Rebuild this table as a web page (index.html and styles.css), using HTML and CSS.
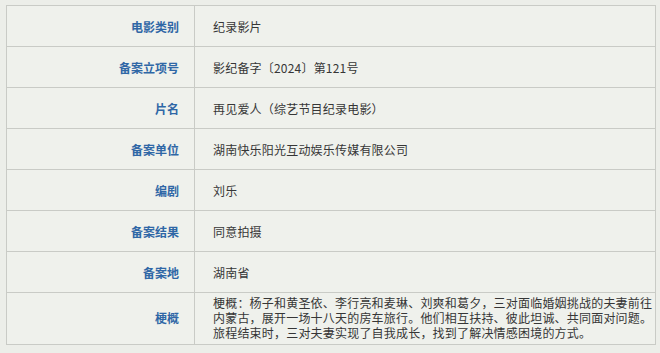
FILE: index.html
```html
<!DOCTYPE html>
<html lang="zh-CN">
<head>
<meta charset="utf-8">
<title>备案信息</title>
<link rel="stylesheet" href="styles.css">
</head>
<body>
<div class="page">
  <table class="info">
    <tr><th>电影类别</th><td>纪录影片</td></tr>
    <tr><th>备案立项号</th><td>影纪备字〔2024〕第121号</td></tr>
    <tr><th>片名</th><td>再见爱人（综艺节目纪录电影）</td></tr>
    <tr><th>备案单位</th><td>湖南快乐阳光互动娱乐传媒有限公司</td></tr>
    <tr><th>编剧</th><td>刘乐</td></tr>
    <tr><th>备案结果</th><td>同意拍摄</td></tr>
    <tr><th>备案地</th><td>湖南省</td></tr>
    <tr class="tall"><th>梗概</th><td><span class="ln">梗概：杨子和黄圣依、李行亮和麦琳、刘爽和葛夕，三对面临婚姻挑战的夫妻前往</span><span class="ln">内蒙古，展开一场十八天的房车旅行。他们相互扶持、彼此坦诚、共同面对问题。</span><span class="ln">旅程结束时，三对夫妻实现了自我成长，找到了解决情感困境的方式。</span></td></tr>
  </table>
</div>
</body>
</html>
```
FILE: styles.css
```css
html, body {
  margin: 0;
  padding: 0;
  background: #eceee9;
}
.page {
  padding: 5px 4px 0 6px;
  font-family: "Noto Sans CJK SC", "Noto Sans", sans-serif;
}
.info {
  width: 650px;
  border-collapse: collapse;
  background: #eff1ec;
  border: 1px solid #c6c8c3;
}
.info th,
.info td {
  border: 1px solid #c9cbc6;
  height: 40px;
  padding: 0;
  font-size: 12px;
  line-height: 15px;
  vertical-align: middle;
}
.info th {
  width: 172px;
  padding-right: 15px;
  text-align: right;
  color: #2f67a6;
  font-weight: bold;
}
.info td {
  padding-left: 18px;
  text-align: left;
  color: #363636;
  letter-spacing: 0.2px;
  white-space: nowrap;
}
.info .tall th,
.info .tall td {
  height: 48px;
  padding-bottom: 3px;
}
.ln {
  display: block;
  height: 15px;
}
```
